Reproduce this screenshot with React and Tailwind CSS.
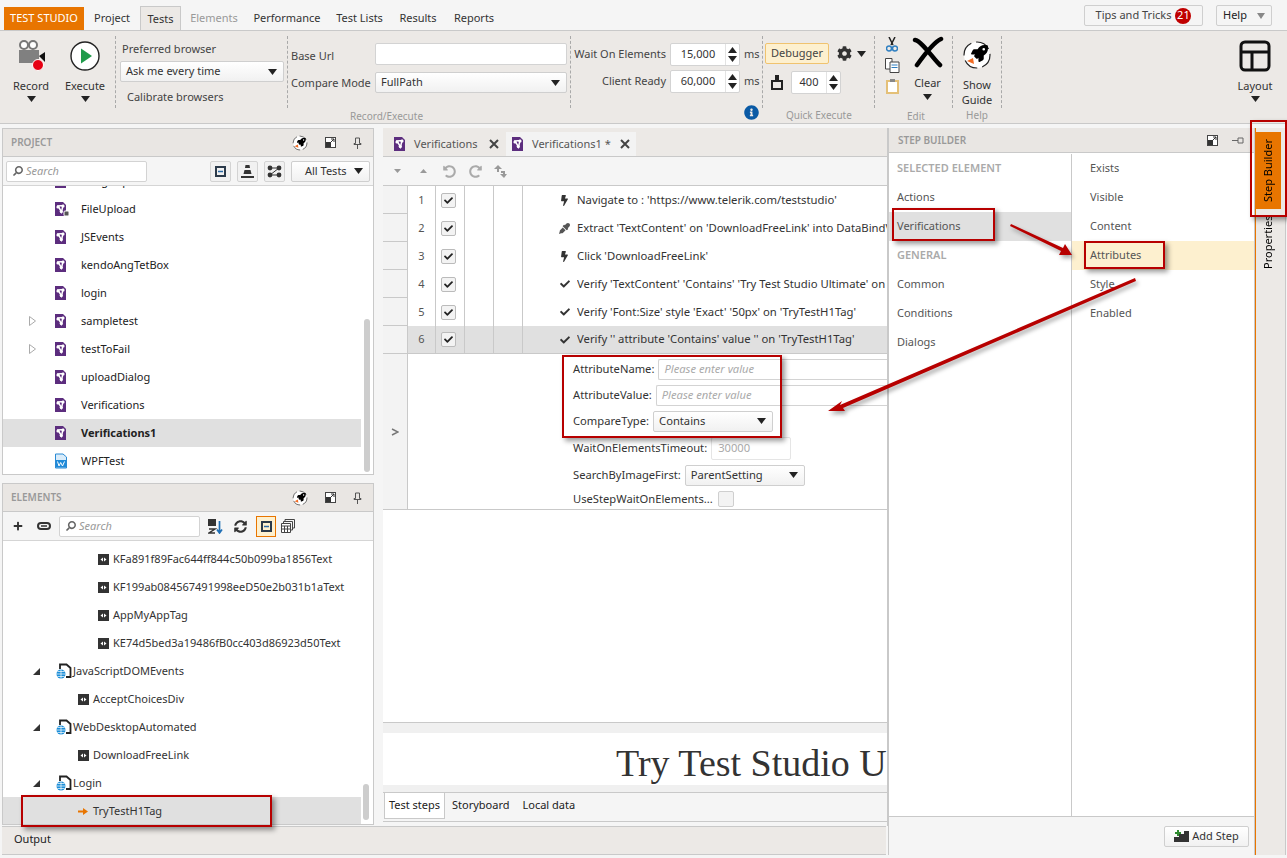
import React from "react";
import { FaBolt, FaCheck, FaCog, FaEyeDropper, FaInfoCircle, FaPlus, FaRocket, FaSearch, FaSyncAlt, FaUndoAlt, FaRedoAlt } from "react-icons/fa";

const RED = "#b70000";

const Caret = ({ className = "" }) => (
  <svg width="9" height="6" viewBox="0 0 9 6" className={className}>
    <path d="M0 0H9L4.5 6Z" fill="#222" />
  </svg>
);

const TestIcon = ({ badge }) => (
  <svg width="15" height="16" viewBox="0 0 15 16" className="shrink-0">
    <path d="M0 1H8L11 4V15H0Z" fill="#5c2d7e" />
    <path d="M3 5L8 4.5 6.5 11Z" fill="none" stroke="#fff" strokeWidth="1.5" />
    <circle cx="3" cy="6" r="1.6" fill="#fff" />
    <circle cx="8" cy="5" r="1.6" fill="#fff" />
    <circle cx="6.3" cy="10.6" r="1.6" fill="#fff" />
    {badge && <rect x="9" y="10" width="5" height="5" rx="1" fill="#555" stroke="#fff" />}
  </svg>
);

const ElemIcon = () => (
  <svg width="11" height="11" viewBox="0 0 11 11" className="shrink-0">
    <rect width="11" height="11" fill="#333" />
    <path d="M5 3.5V7.5L2.5 5.5ZM6 3.5V7.5L8.5 5.5Z" fill="#fff" />
  </svg>
);

const WebIcon = () => (
  <svg width="16" height="16" viewBox="0 0 16 16" className="shrink-0">
    <path d="M4 6V1.5H10.5L14.5 5V14H10" fill="none" stroke="#222" strokeWidth="1.8" />
    <circle cx="5" cy="11" r="4.5" fill="#1c8ed8" />
    <path d="M.5 11H9.5M5 6.5V15.5M1.5 8.5H8.5M1.5 13.5H8.5" stroke="#fff" strokeWidth=".7" />
  </svg>
);

const RocketIcon = ({ size, rocket }) => (
  <svg width={size} height={size} viewBox="0 0 30 30">
    <circle cx="15" cy="15" r="13" fill="#fff" stroke="#222" strokeWidth="1.2" strokeDasharray="15 5" />
    <g transform="translate(9 5)"><FaRocket size={rocket} color="#000" /></g>
    <path d="M5 21L11 18 12 24Z" fill="#f26a21" />
  </svg>
);

const ExpandIcon = () => (
  <svg width="11" height="11" viewBox="0 0 11 11">
    <rect x=".5" y=".5" width="10" height="10" fill="#fff" stroke="#444" />
    <rect x="1" y="5" width="5" height="5" fill="#333" />
    <path d="M5 6L9 2M6 2H9V5" fill="none" stroke="#333" />
  </svg>
);

const PanelIcons = () => (
  <div className="flex items-center gap-[17px] text-[#444]">
    <RocketIcon size={16} rocket={17} />
    <ExpandIcon />
    <svg width="9" height="12" viewBox="0 0 9 12">
      <path d="M2.5 1H6.5V6.5H8V7.5H1V6.5H2.5ZM4.5 7.5V12" fill="none" stroke="#555" />
    </svg>
  </div>
);

const SelectBox = ({ text, className = "" }) => (
  <div className={`flex items-center justify-between rounded-[2px] border border-[#cfcfcf] bg-gradient-to-b from-white to-[#f1f1f1] pl-[5px] pr-[6px] text-[#333] ${className}`}>
    <span>{text}</span>
    <Caret />
  </div>
);

const Spinner = ({ value, w }) => (
  <div className={`flex h-[23px] items-center rounded-[2px] border border-[#d3d3d3] bg-white ${w}`}>
    <span className="flex-1 text-center text-[#333]">{value}</span>
    <div className="flex h-full w-[14px] flex-col items-center justify-center gap-[3px] border-l border-[#e3e3e3]">
      <Caret className="rotate-180" />
      <Caret />
    </div>
  </div>
);

const Sep = () => <div className="mt-[5px] h-[72px] w-0 shrink-0 border-l border-dashed border-[#a9a9a9]" />;

const RibbonBtn = ({ label, icon, w }) => (
  <div className={`flex flex-col items-center text-[#333] ${w}`}>
    <div className="flex h-[36px] items-center justify-center">{icon}</div>
    <div className="mt-[3px] h-[17px] leading-[17px]">{label}</div>
    <Caret className="mt-[2px]" />
  </div>
);

function Ribbon() {
  return (
    <div className="relative flex h-[94px] border-y border-[#c9c9c9] bg-[#ece9e6] pl-[4px] text-[11px]">
      <div className="flex w-[111px] pt-[7px]">
        <RibbonBtn w="w-[54px]" label="Record" icon={
          <svg width="30" height="32" viewBox="0 0 30 32">
            <circle cx="8" cy="5" r="4" fill="#fff" stroke="#777" strokeWidth="2" />
            <circle cx="17" cy="5" r="4" fill="#fff" stroke="#777" strokeWidth="2" />
            <rect x="3" y="10" width="20" height="13" fill="#808080" />
            <path d="M23 16L29 12V22Z" fill="#111" />
            <circle cx="22" cy="25" r="5.5" fill="#e60012" stroke="#fff" />
          </svg>} />
        <RibbonBtn w="w-[54px]" label="Execute" icon={
          <svg width="30" height="30" viewBox="0 0 30 30">
            <circle cx="15" cy="15" r="14" fill="#fff" stroke="#222" strokeWidth="1.4" />
            <path d="M11 7.5L22 15 11 22.5Z" fill="#1f9a4a" />
          </svg>} />
      </div>
      <Sep />
      <div className="flex w-[171px] flex-col pl-[4px] pt-[10px]">
        <div className="h-[16px] pl-[2px] leading-[16px] text-[#444]">Preferred browser</div>
        <SelectBox text="Ask me every time" className="mt-[4px] h-[21px] w-[164px]" />
        <div className="mt-[7px] pl-[7px] leading-[16px] text-[#444]">Calibrate browsers</div>
      </div>
      <Sep />
      <div className="flex w-[282px] flex-col gap-[7px] pl-[3px] pr-[3px] pt-[12px] text-[#444]">
        <div className="flex h-[23px] items-center">
          <span className="w-[84px] pt-[4px]">Base Url</span>
          <div className="h-full flex-1 rounded-[2px] border border-[#d3d3d3] bg-white" />
        </div>
        <div className="flex h-[21px] items-center">
          <span className="w-[84px] whitespace-nowrap pt-[2px]">Compare Mode</span>
          <SelectBox text="FullPath" className="h-full flex-1" />
        </div>
        <div className="mt-[9px] pl-[59px] text-[10px] leading-[14px] text-[#999]">Record/Execute</div>
      </div>
      <Sep />
      <div className="relative flex w-[191px] flex-col gap-[4px] pl-[3px] pt-[12px] text-[#444]">
        <div className="flex items-center">
          <span className="w-[92px] whitespace-nowrap text-right">Wait On Elements</span>
          <div className="ml-[4px]"><Spinner value="15,000" w="w-[70px]" /></div>
          <span className="ml-[4px]">ms</span>
        </div>
        <div className="flex items-center">
          <span className="w-[92px] text-right">Client Ready</span>
          <div className="ml-[4px]"><Spinner value="60,000" w="w-[70px]" /></div>
          <span className="ml-[4px]">ms</span>
        </div>
        <FaInfoCircle size={15} className="absolute left-[173px] top-[74px] text-[#0a5aa5]" />
      </div>
      <Sep />
      <div className="flex w-[111px] flex-col pl-[2px] pt-[12px] text-[#444]">
        <div className="flex items-center">
          <div className="flex h-[21px] w-[64px] items-center justify-center rounded-[2px] border border-[#f0c36f] bg-[#fdf0cf]">Debugger</div>
          <FaCog size={15} className="ml-[8px] text-[#333]" />
          <Caret className="ml-[5px]" />
        </div>
        <div className="mt-[7px] flex items-center">
          <svg width="12" height="15" viewBox="0 0 12 15" className="ml-[6px]">
            <rect x="4" y="0" width="4" height="6" fill="#222" />
            <path d="M1 6H11V14H1Z" fill="none" stroke="#222" strokeWidth="2" />
          </svg>
          <div className="ml-[8px]"><Spinner value="400" w="w-[50px]" /></div>
        </div>
        <div className="mt-[14px] pl-[21px] text-[10px] leading-[14px] text-[#999]">Quick Execute</div>
      </div>
      <Sep />
      <div className="flex w-[77px] flex-col">
        <div className="flex h-[71px]">
          <div className="flex w-[32px] flex-col items-center gap-[6px] pl-[2px] pt-[6px]">
            <svg width="12" height="15" viewBox="0 0 12 15">
              <path d="M3 0L7 8M9 0L5 8" stroke="#222" strokeWidth="1.5" />
              <circle cx="3" cy="11.5" r="2.5" fill="none" stroke="#2f7fc1" strokeWidth="1.5" />
              <circle cx="9" cy="11.5" r="2.5" fill="none" stroke="#2f7fc1" strokeWidth="1.5" />
            </svg>
            <svg width="15" height="15" viewBox="0 0 15 15">
              <path d="M.5 .5H7V11H.5Z" fill="#fff" stroke="#444" />
              <path d="M5 4H14V14.5H5Z" fill="#fff" stroke="#444" />
              <path d="M6.5 7H12.5M6.5 9.5H12.5" stroke="#2f7fc1" />
            </svg>
            <svg width="13" height="15" viewBox="0 0 13 15">
              <path d="M1 2H12V14H1Z" fill="#fff" stroke="#e4c078" strokeWidth="2" />
              <rect x="4" y="0" width="5" height="3" fill="#888" />
            </svg>
          </div>
          <div className="flex flex-1 flex-col items-center pr-[4px] pt-[5px]">
            <svg width="32" height="32" viewBox="0 0 32 32">
              <path d="M3 4C10 5 22 24 28 29M29 3C22 6 10 22 5 29" fill="none" stroke="#000" strokeWidth="4.5" strokeLinecap="round" />
            </svg>
            <div className="mt-[7px] h-[16px] leading-[16px] text-[#333]">Clear</div>
            <Caret className="mt-[3px]" />
          </div>
        </div>
        <div className="mt-[7px] pl-[32px] text-[10px] leading-[14px] text-[#999]">Edit</div>
      </div>
      <Sep />
      <div className="flex w-[48px] flex-col items-center text-[#333]">
        <div className="mt-[9px]"><RocketIcon size={30} rocket={17} /></div>
        <div className="mt-[7px] leading-[15px]">Show</div>
        <div className="leading-[15px]">Guide</div>
        <div className="mt-[1px] text-[10px] leading-[14px] text-[#999]">Help</div>
      </div>
      <Sep />
      <div className="ml-[228px] flex w-[50px] flex-col items-center text-[#333]">
        <svg width="32" height="32" viewBox="0 0 32 32" className="mt-[9px]">
          <rect x="2" y="2" width="28" height="28" rx="4" fill="none" stroke="#111" strokeWidth="3" />
          <path d="M2 12H30M13 12V30" stroke="#111" strokeWidth="3" />
        </svg>
        <div className="mt-[5px] h-[17px] leading-[17px]">Layout</div>
        <Caret className="mt-[2px]" />
      </div>
    </div>
  );
}

function TopTabs() {
  const tabs = [
    { t: "Elements", c: "ml-[10px] w-[46px] text-[#999]" },
    { t: "Performance", c: "ml-[18px] w-[64px]" },
    { t: "Test Lists", c: "ml-[18px] w-[45px]" },
    { t: "Results", c: "ml-[18px] w-[36px]" },
    { t: "Reports", c: "ml-[18px] w-[40px]" },
  ];
  return (
    <div className="flex h-[27px] items-end bg-[#f5f5f5] pl-[4px] text-[11px] text-[#333]">
      <div className="flex h-[23px] w-[80px] items-center justify-center bg-[#e87500] text-white">TEST STUDIO</div>
      <div className="flex h-[23px] w-[56px] items-center justify-center">Project</div>
      <div className="-mb-px flex h-[25px] w-[41px] items-center justify-center border-x border-t border-[#c9c9c9] bg-[#ece9e6]">Tests</div>
      {tabs.map((tab) => (
        <div key={tab.t} className={`flex h-[23px] items-center justify-center whitespace-nowrap ${tab.c}`}>{tab.t}</div>
      ))}
      <div className="ml-auto mb-[4px] flex h-[21px] w-[119px] items-center justify-center gap-[4px] rounded-[2px] border border-[#cfcfcf] text-[#444]">
        Tips and Tricks
        <span className="flex h-[16px] w-[16px] items-center justify-center rounded-full bg-[#c00000] text-white">21</span>
      </div>
      <div className="mb-[4px] ml-[13px] mr-[15px] flex h-[21px] w-[56px] items-center justify-between rounded-[2px] border border-[#cfcfcf] px-[6px] text-[#222]">
        Help
        <svg width="8" height="6" viewBox="0 0 8 6"><path d="M0 0H8L4 6Z" fill="#888" /></svg>
      </div>
    </div>
  );
}

const SearchBox = ({ w }) => (
  <div className={`flex h-[21px] items-center gap-[3px] rounded-[2px] border border-[#d3d3d3] bg-white pl-[6px] italic text-[#999] ${w}`}>
    <FaSearch size={10} className="-scale-x-100 text-[#666]" />
    Search
  </div>
);

const SquareBtn = ({ children }) => (
  <div className="flex h-[21px] w-[21px] items-center justify-center rounded-[2px] border border-[#d3d3d3] bg-[#f1f1f1]">{children}</div>
);

const CollapseIcon = () => (
  <svg width="11" height="11" viewBox="0 0 11 11">
    <rect x="1" y="1" width="9" height="9" fill="none" stroke="#2b3a4a" strokeWidth="2" />
    <path d="M3 5.5H8" stroke="#2b6aa5" strokeWidth="1.5" />
  </svg>
);

const projectRows = [
  { n: "ImageUpload" },
  { n: "FileUpload", badge: true },
  { n: "JSEvents" },
  { n: "kendoAngTetBox" },
  { n: "login" },
  { n: "sampletest", arrow: true },
  { n: "testToFail", arrow: true },
  { n: "uploadDialog" },
  { n: "Verifications" },
  { n: "Verifications1", sel: true },
  { n: "WPFTest", wpf: true },
];

function ProjectPanel() {
  return (
    <div className="flex h-[347px] flex-col border border-[#c9c9c9] bg-white">
      <div className="flex h-[28px] shrink-0 items-center justify-between border-b border-[#c9c9c9] bg-[#e9e6e3] pl-[8px] pr-[11px]">
        <span className="text-[10px] font-semibold text-[#999]">PROJECT</span>
        <PanelIcons />
      </div>
      <div className="flex h-[29px] shrink-0 items-center border-b border-[#d5d5d5] bg-[#f5f5f5] pl-[3px] text-[#333]">
        <SearchBox w="w-[141px]" />
        <div className="ml-[63px] flex gap-[6px]">
          <SquareBtn><CollapseIcon /></SquareBtn>
          <SquareBtn>
            <svg width="15" height="13" viewBox="0 0 15 13"><path d="M5.5 0H9.5L10 3H5ZM4.5 5H10.5L11.5 9H3.5ZM1 11H14V13H1Z" fill="#333" /></svg>
          </SquareBtn>
          <SquareBtn>
            <svg width="15" height="13" viewBox="0 0 15 13"><circle cx="3" cy="3" r="2.4" fill="#333" /><circle cx="12" cy="3" r="2.4" fill="#333" /><circle cx="3" cy="10" r="2.4" fill="#333" /><circle cx="12" cy="10" r="2.4" fill="#333" /><path d="M3 3H12M3 10H12M3 10L12 3" stroke="#333" /></svg>
          </SquareBtn>
          <SelectBox text="All Tests" className="h-[21px] w-[79px] justify-between pl-[13px]" />
        </div>
      </div>
      <div className="relative flex-1 overflow-hidden text-[#222]">
        <div className="-mt-[19px]">
          {projectRows.map((r) => (
            <div key={r.n} className={`flex h-[28px] items-center pl-[26px] ${r.sel ? "mr-[12px] bg-[#e0e0e0] font-bold" : ""}`}>
              <span className="w-[26px]">
                {r.arrow && (
                  <svg width="7" height="10" viewBox="0 0 7 10"><path d="M.5 .5L6.5 5 .5 9.500Z" fill="none" stroke="#aaa" /></svg>
                )}
              </span>
              {r.wpf ? (
                <svg width="15" height="16" viewBox="0 0 15 16" className="shrink-0">
                  <path d="M.5 1H8L11.500 4V15H.5Z" fill="#d9ecfa" stroke="#2a8ad4" />
                  <rect x="1" y="7" width="10" height="7.500" fill="#1f8ad8" />
                  <path d="M2.500 8.500L4 13 5.700 9.500 7.500 13 9.500 8.500" fill="none" stroke="#fff" strokeWidth="1" />
                </svg>
              ) : (
                <TestIcon badge={r.badge} />
              )}
              <span className="ml-[11px]">{r.n}</span>
            </div>
          ))}
        </div>
        <div className="absolute right-[3px] top-[133px] h-[153px] w-[6px] rounded-full bg-[#cdcdcd]" />
      </div>
    </div>
  );
}

const elementRows = [
  { n: "KFa891f89Fac644ff844c50b099ba1856Text", pad: "pl-[95px]" },
  { n: "KF199ab084567491998eeD50e2b031b1aText", pad: "pl-[95px]" },
  { n: "AppMyAppTag", pad: "pl-[95px]" },
  { n: "KE74d5bed3a19486fB0cc403d86923d50Text", pad: "pl-[95px]" },
  { n: "JavaScriptDOMEvents", web: true },
  { n: "AcceptChoicesDiv", pad: "pl-[75px]" },
  { n: "WebDesktopAutomated", web: true },
  { n: "DownloadFreeLink", pad: "pl-[75px]" },
  { n: "Login", web: true },
  { n: "TryTestH1Tag", pad: "pl-[75px]", sel: true },
];

function ElementsPanel() {
  return (
    <div className="mt-[8px] flex h-[342px] flex-col border border-[#c9c9c9] bg-white">
      <div className="flex h-[28px] shrink-0 items-center justify-between border-b border-[#c9c9c9] bg-[#e9e6e3] pl-[8px] pr-[11px]">
        <span className="text-[10px] font-semibold text-[#999]">ELEMENTS</span>
        <PanelIcons />
      </div>
      <div className="flex h-[29px] shrink-0 items-center border-b border-[#d5d5d5] bg-[#f5f5f5] pl-[10px] text-[#333]">
        <FaPlus size={10} />
        <svg width="14" height="8" viewBox="0 0 14 8" className="ml-[14px]">
          <rect x="1" y="1" width="12" height="6" rx="3" fill="none" stroke="#333" strokeWidth="2" />
          <path d="M4 4H10" stroke="#333" strokeWidth="1.500" />
        </svg>
        <div className="ml-[8px]"><SearchBox w="w-[141px]" /></div>
        <svg width="15" height="15" viewBox="0 0 15 15" className="ml-[8px]">
          <rect width="8" height="7" fill="#333" />
          <path d="M1 10H7L1 14H7" fill="none" stroke="#333" strokeWidth="1.500" />
          <path d="M11.500 2V13M9 10.500L11.500 14 14 10.500" fill="none" stroke="#1f6fb5" strokeWidth="1.700" />
        </svg>
        <FaSyncAlt size={13} className="ml-[11px]" />
        <div className="ml-[9px] flex h-[21px] w-[20px] items-center justify-center border border-[#e87500] bg-[#fdf0cf]"><CollapseIcon /></div>
        <svg width="14" height="14" viewBox="0 0 14 14" className="ml-[5px]">
          <path d="M4 2.500V.5H13.500V9H11.500M2.500 4.500V2.500H11.500V11H9.500" fill="none" stroke="#444" />
          <path d="M.5 4.500H9.500V13.500H.5ZM.5 7H9.500M3.500 7V13.500M6.500 7V13.500M.5 10H9.500" fill="#fff" stroke="#444" />
        </svg>
      </div>
      <div className="relative flex-1 overflow-hidden pt-[4px] text-[#333]">
        {elementRows.map((r) =>
          r.web ? (
            <div key={r.n} className="flex h-[28px] items-center pl-[29px]">
              <svg width="9" height="9" viewBox="0 0 9 9"><path d="M8 1V8H1Z" fill="#333" /></svg>
              <span className="ml-[15px]"><WebIcon /></span>
              <span className="ml-[1px]">{r.n}</span>
            </div>
          ) : (
            <div key={r.n} className={`flex h-[28px] items-center ${r.pad} ${r.sel ? "mr-[12px] bg-[#e0e0e0]" : ""}`}>
              {r.sel ? (
                <svg width="11" height="9" viewBox="0 0 11 9" className="shrink-0"><path d="M0 3.500H5V1L10 4.500 5 8V5.500H0Z" fill="#e87500" /></svg>
              ) : (
                <ElemIcon />
              )}
              <span className="ml-[4px]">{r.n}</span>
            </div>
          )
        )}
        <div className="absolute right-[4px] top-[243px] h-[36px] w-[6px] rounded-full bg-[#cdcdcd]" />
      </div>
    </div>
  );
}

const steps = [
  { n: 1, icon: <FaBolt size={11} />, t: "Navigate to : 'https://www.telerik.com/teststudio'" },
  { n: 2, icon: <FaEyeDropper size={11} className="text-[#555]" />, t: "Extract 'TextContent' on 'DownloadFreeLink' into DataBindV" },
  { n: 3, icon: <FaBolt size={11} />, t: "Click 'DownloadFreeLink'" },
  { n: 4, icon: <FaCheck size={10} />, t: "Verify 'TextContent' 'Contains' 'Try Test Studio Ultimate' on" },
  { n: 5, icon: <FaCheck size={10} />, t: "Verify 'Font:Size' style 'Exact' '50px' on 'TryTestH1Tag'" },
  { n: 6, icon: <FaCheck size={10} />, t: "Verify '' attribute 'Contains' value '' on 'TryTestH1Tag'", sel: true },
];

function StepRow({ s }) {
  return (
    <div className="flex h-[28px]">
      <div className="w-[25px] shrink-0 border-b border-r border-[#c9c9c9] bg-[#f3f3f3]" />
      <div className={`flex min-w-0 flex-1 items-center ${s.sel ? "border-b border-[#c9c9c9] bg-[#e0e0e0]" : ""}`}>
        <div className="flex h-full w-[28px] shrink-0 items-center justify-center border-r border-[#c9c9c9] text-[#555]">{s.n}</div>
        <div className="flex h-full w-[29px] shrink-0 items-center justify-center border-r border-[#c9c9c9] pr-[4px]">
          <span className="flex h-[15px] w-[15px] items-center justify-center rounded-[2px] border border-[#bbb] bg-[#f3f3f3] text-[#222]"><FaCheck size={9} /></span>
        </div>
        <div className="h-full w-[29px] shrink-0 border-r border-[#c9c9c9]" />
        <div className="h-full w-[29px] shrink-0 border-r border-[#c9c9c9]" />
        <div className="ml-[35px] flex w-[13px] shrink-0 justify-center text-[#333]">{s.icon}</div>
        <div className="ml-[6px] min-w-0 flex-1 overflow-hidden whitespace-nowrap text-[11.3px] text-[#333]">{s.t}</div>
      </div>
    </div>
  );
}

const Field = ({ label, children, h = "h-[26px]" }) => (
  <div className={`flex items-center gap-[4px] whitespace-nowrap text-[11.2px] text-[#333] ${h}`}>
    <span>{label}</span>
    {children}
  </div>
);

const Placeholder = ({ w }) => (
  <div className={`flex h-[21px] shrink-0 items-center rounded-l-[2px] border border-r-0 border-[#d3d3d3] bg-white pl-[5px] italic text-[#aaa] ${w}`}>Please enter value</div>
);

function CenterPanel() {
  return (
    <div className="flex h-[698px] w-[505px] flex-col overflow-hidden border-r border-[#c9c9c9] bg-white">
      <div className="flex h-[29px] shrink-0 border-b border-[#c9c9c9] bg-[#ece9e6] pt-[4px] text-[#555]">
        <div className="flex w-[123px] items-center pl-[11px]">
          <TestIcon />
          <span className="ml-[5px]">Verifications</span>
          <span className="ml-auto mr-[7px] text-[#333]"><svg width="10" height="10" viewBox="0 0 10 10"><path d="M1 1L9 9M9 1L1 9" stroke="#444" strokeWidth="2" /></svg></span>
        </div>
        <div className="flex w-[130px] items-center bg-[#f3f3f3] pl-[6px]">
          <TestIcon />
          <span className="ml-[5px]">Verifications1 *</span>
          <span className="ml-auto mr-[6px]"><svg width="10" height="10" viewBox="0 0 10 10"><path d="M1 1L9 9M9 1L1 9" stroke="#444" strokeWidth="2" /></svg></span>
        </div>
      </div>
      <div className="flex h-[29px] shrink-0 items-center border-b border-[#c9c9c9] bg-[#f5f5f5] pl-[11px] text-[#aaa]">
        <svg width="7" height="4" viewBox="0 0 7 4"><path d="M0 0H7L3.500 4Z" fill="#999" /></svg>
        <svg width="7" height="4" viewBox="0 0 7 4" className="ml-[19px]"><path d="M0 4H7L3.500 0Z" fill="#999" /></svg>
        <FaUndoAlt size={13} className="ml-[16px]" />
        <FaRedoAlt size={13} className="ml-[13px]" />
        <svg width="14" height="13" viewBox="0 0 14 13" className="ml-[12px]"><path d="M0 4L4 0 8 4H5V7H3V4ZM7 6H11V9H13L10 13 6 9H9V8H7Z" fill="#999" /></svg>
      </div>
      {steps.map((s) => <StepRow key={s.n} s={s} />)}
      <div className="flex h-[156px] shrink-0 border-b border-[#c9c9c9]">
        <div className="flex w-[25px] shrink-0 items-center justify-center border-r border-[#c9c9c9] bg-[#f3f3f3]">
          <svg width="8" height="8" viewBox="0 0 8 8"><path d="M1 1L7 4 1 7" fill="none" stroke="#777" strokeWidth="1.500" /></svg>
        </div>
        <div className="pl-[165px] pt-[2px]">
          <Field label="AttributeName:"><Placeholder w="w-[229px]" /></Field>
          <Field label="AttributeValue:"><Placeholder w="w-[233px]" /></Field>
          <Field label="CompareType:">
            <SelectBox text="Contains" className="h-[21px] w-[120px]" />
          </Field>
          <Field label="WaitOnElementsTimeout:" h="h-[28px]">
            <div className="flex h-[23px] w-[80px] items-center rounded-[2px] border border-[#e5e5e5] pl-[6px] text-[#aaa]">30000</div>
          </Field>
          <Field label="SearchByImageFirst:">
            <SelectBox text="ParentSetting" className="h-[21px] w-[120px]" />
          </Field>
          <Field label="UseStepWaitOnElements..." h="h-[22px]">
            <span className="ml-[1px] h-[16px] w-[16px] rounded-[2px] border border-[#cfcfcf] bg-[#f3f3f3]" />
          </Field>
        </div>
      </div>
      <div className="flex-1" />
      <div className="h-[11px] shrink-0 border-t border-[#c9c9c9] bg-[#f0f0f0]" />
      <div className="flex h-[52px] shrink-0 items-center overflow-hidden whitespace-nowrap pl-[233px] pt-[8px] font-['Liberation_Serif',serif] text-[38px] text-[#333]">
        Try Test Studio U
      </div>
      <div className="h-[7px] shrink-0 bg-[#f0f0f0]" />
      <div className="flex h-[30px] shrink-0 items-start border-y border-[#c9c9c9] bg-[#f5f5f5] pl-[1px] text-[#222]">
        <div className="flex h-[26px] w-[61px] items-center justify-center border-x border-b border-[#c9c9c9] bg-white">Test steps</div>
        <div className="ml-[7px] flex h-[25px] items-center">Storyboard</div>
        <div className="ml-[13px] flex h-[25px] items-center">Local data</div>
      </div>
      <div className="h-[4px] shrink-0 bg-[#f5f5f5]" />
    </div>
  );
}

function StepBuilder() {
  const left = [
    { t: "SELECTED ELEMENT", head: true },
    { t: "Actions" },
    { t: "Verifications", sel: true },
    { t: "GENERAL", head: true },
    { t: "Common" },
    { t: "Conditions" },
    { t: "Dialogs" },
  ];
  const right = ["Exists", "Visible", "Content", "Attributes", "Style", "Enabled"];
  return (
    <div className="flex h-[727px] w-[367px] shrink-0 flex-col border-x border-[#c9c9c9] bg-white">
      <div className="flex h-[25px] shrink-0 items-center justify-between border-b border-[#c9c9c9] bg-[#e9e6e3] pl-[9px] pr-[10px]">
        <span className="text-[10px] font-semibold text-[#999]">STEP BUILDER</span>
        <div className="flex items-center gap-[14px]">
          <ExpandIcon />
          <svg width="12" height="9" viewBox="0 0 12 9"><path d="M0 4.500H6M6 2V7H11V2Z" fill="none" stroke="#666" /></svg>
        </div>
      </div>
      <div className="flex flex-1 border-b border-[#c9c9c9] pt-[1px] text-[#555]">
        <div className="w-[183px] shrink-0 border-r border-[#c9c9c9]">
          {left.map((r) => (
            <div key={r.t} className={`flex h-[29px] items-center pl-[8px] ${r.head ? "text-[11px] font-semibold text-[#aaa]" : ""} ${r.sel ? "bg-[#e0e0e0]" : ""}`}>{r.t}</div>
          ))}
        </div>
        <div className="flex-1">
          {right.map((t) => (
            <div key={t} className={`flex h-[29px] items-center pl-[18px] ${t === "Attributes" ? "bg-[#fdf0cf]" : ""}`}>{t}</div>
          ))}
        </div>
      </div>
      <div className="flex h-[38px] shrink-0 items-center justify-end bg-[#f5f5f5] pr-[5px]">
        <div className="flex h-[21px] w-[85px] items-center justify-center gap-[3px] rounded-[2px] border border-[#cfcfcf] bg-gradient-to-b from-white to-[#f1f1f1] text-[#333]">
          <svg width="15" height="12" viewBox="0 0 15 12"><path d="M0 12V7H5V4H10V1H15V12Z" fill="#333" /><path d="M1 3H7M4 0V6" stroke="#2d8a2d" strokeWidth="2" /></svg>
          Add Step
        </div>
      </div>
    </div>
  );
}

const Mark = ({ className }) => (
  <div className={`absolute border-2 border-[#b70000] shadow-[3px_3px_5px_rgba(0,0,0,0.4)] ${className}`} />
);

export default function App() {
  return (
    <div className="relative h-[858px] w-[1287px] overflow-hidden bg-[#f5f5f5] pt-[3px] font-['Noto_Sans',sans-serif] text-[11px]">
      <TopTabs />
      <Ribbon />
      <div className="mt-[4px] flex">
        <div className="flex w-[886px] shrink-0 flex-col pl-[2px]">
          <div className="flex h-[698px]">
            <div className="w-[372px] shrink-0">
              <ProjectPanel />
              <ElementsPanel />
            </div>
            <div className="ml-[9px]"><CenterPanel /></div>
          </div>
          <div className="flex h-[29px] items-center border-y border-[#c9c9c9] bg-[#ece9e6] pb-[2px] pl-[12px] text-[#222]">Output</div>
        </div>
        <div className="ml-[2px]"><StepBuilder /></div>
        <div className="h-[727px] w-[31px] border-x border-l-[#e87500] border-r-[#c9c9c9] bg-[#ece9e6] pt-[4px]">
          <div className="flex h-[77px] w-[25px] rotate-180 items-center justify-center bg-[#e87500] text-black [writing-mode:vertical-rl]">Step Builder</div>
          <div className="mt-[7px] flex h-[52px] w-[25px] rotate-180 items-center justify-center text-black [writing-mode:vertical-rl]">Properties</div>
        </div>
      </div>

      {/* red call-outs drawn on top of the screenshot */}
      <Mark className="left-[892px] top-[208px] h-[33px] w-[103px]" />
      <Mark className="left-[1084px] top-[241px] h-[28px] w-[81px]" />
      <Mark className="left-[1250px] top-[120px] h-[97px] w-[37px]" />
      <Mark className="left-[562px] top-[355px] h-[83px] w-[220px]" />
      <Mark className="left-[21px] top-[795px] h-[32px] w-[251px]" />
      <svg width="1287" height="858" className="pointer-events-none absolute left-0 top-0 drop-shadow-[2px_3px_2px_rgba(0,0,0,0.35)]">
        <path d="M1011 224L1063 248 1065 244 1072 255 1059 255 1061 251 1010 226Z" fill={RED} />
        <path d="M1135 278L840 405 842 401 828 411 845 411 843 408 1136 281Z" fill={RED} />
      </svg>
    </div>
  );
}
